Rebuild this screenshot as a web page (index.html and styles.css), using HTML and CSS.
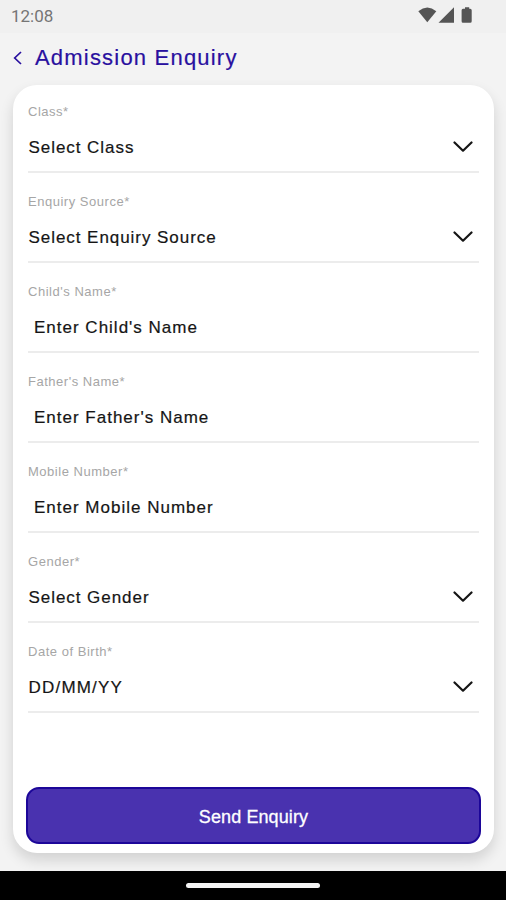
FILE: index.html
```html
<!DOCTYPE html>
<html lang="en">
<head>
<meta charset="utf-8">
<title>Admission Enquiry</title>
<link rel="stylesheet" href="styles.css">
</head>
<body>
<div class="status">
  <span class="time">12:08</span>
  <svg class="status-icons" width="56" height="18" viewBox="0 0 56 18" fill="#555">
    <path d="M0.3 4.2Q9.3 -3.2 18.3 4.2L9.3 15.2Z"/>
    <path d="M20.5 15.8L36 .2V15.8Z"/>
    <path d="M45 1.8H47V.3H51.200V1.8H52.200Q53.700 1.8 53.700 3.300V14.300Q53.700 15.800 52.200 15.800H45Q43.600 15.800 43.600 14.300V3.300Q43.600 1.800 45 1.800Z"/>
  </svg>
</div>
<header class="header">
  <svg class="back" width="10" height="14" viewBox="0 0 10 14"><path d="M8 1L1.700 7L8 13"/></svg>
  <h1 class="title">Admission Enquiry</h1>
</header>
<main class="card">
  <div class="field"><div class="label">Class*</div><div class="value">Select Class<svg class="chevron" viewBox="0 0 20 12"><path d="M1.500 1.500L10 9.700L18.500 1.500"/></svg></div></div>
  <div class="field"><div class="label">Enquiry Source*</div><div class="value">Select Enquiry Source<svg class="chevron" viewBox="0 0 20 12"><path d="M1.500 1.500L10 9.700L18.500 1.500"/></svg></div></div>
  <div class="field"><div class="label">Child's Name*</div><div class="value input">Enter Child's Name</div></div>
  <div class="field"><div class="label">Father's Name*</div><div class="value input">Enter Father's Name</div></div>
  <div class="field"><div class="label">Mobile Number*</div><div class="value input">Enter Mobile Number</div></div>
  <div class="field"><div class="label">Gender*</div><div class="value">Select Gender<svg class="chevron" viewBox="0 0 20 12"><path d="M1.500 1.500L10 9.700L18.500 1.500"/></svg></div></div>
  <div class="field"><div class="label">Date of Birth*</div><div class="value date">DD/MM/YY<svg class="chevron" viewBox="0 0 20 12"><path d="M1.500 1.500L10 9.700L18.500 1.500"/></svg></div></div>
  <button class="send" type="button">Send Enquiry</button>
</main>
<footer class="navbar"><div class="handle"></div></footer>
</body>
</html>
```
FILE: styles.css
```css
* { box-sizing: border-box; }
body {
  margin: 0;
  height: 900px;
  display: flex;
  flex-direction: column;
  overflow: hidden;
  background: #f3f3f3;
  font-family: "Liberation Sans", Arial, sans-serif;
}
.status {
  height: 33px;
  flex: none;
  display: flex;
  justify-content: space-between;
  padding: 7px 32px 0 11px;
  background: #f0f0f0;
}
.time {
  font: 17px/18px Roboto, sans-serif;
  color: #757575;
}
.header {
  height: 52px;
  flex: none;
  display: flex;
  align-items: center;
  gap: 12px;
  padding: 0 0 3px 13px;
}
.back { fill: none; stroke: #29109f; stroke-width: 1.7; }
.title {
  margin: 0;
  font-size: 22px;
  line-height: 26px;
  font-weight: 400;
  letter-spacing: 1.2px;
  color: #29109f;
  -webkit-text-stroke: 0.2px #29109f;
}
.card {
  height: 768px;
  flex: none;
  display: flex;
  flex-direction: column;
  margin: 0 12px 0 13px;
  padding: 0 13px 9px;
  background: #fff;
  border-radius: 24px;
  box-shadow: 0 7px 14px rgba(0, 0, 0, 0.14);
}
.field {
  height: 90px;
  flex: none;
  margin: 0 2px;
  padding-top: 21px;
  border-bottom: 2px solid #ececec;
}
.field:first-child { height: 88px; padding-top: 19px; }
.label {
  font-size: 13px;
  line-height: 16px;
  letter-spacing: 0.52px;
  color: #a6a6a6;
}
.value {
  display: flex;
  align-items: center;
  justify-content: space-between;
  height: 20px;
  margin-top: 18px;
  padding: 0 6px 0 0.5px;
  font-size: 17px;
  letter-spacing: 0.95px;
  color: #151515;
  -webkit-text-stroke: 0.2px #151515;
}
.input { padding-left: 6px; letter-spacing: 1px; }
.date { letter-spacing: 1.2px; }
.chevron {
  width: 20px;
  height: 12px;
  margin-bottom: 3px;
  fill: none;
  stroke: #151515;
  stroke-width: 2.2;
  stroke-linecap: round;
  stroke-linejoin: round;
}
.send {
  height: 57px;
  margin-top: auto;
  padding: 3px 0 0;
  border: 2px solid #1c0699;
  border-radius: 13px;
  background: #4932af;
  color: #fff;
  font: 18px "Liberation Sans", Arial, sans-serif;
  letter-spacing: 0.1px;
  -webkit-text-stroke: 0.3px #fff;
}
.navbar {
  height: 29px;
  flex: none;
  margin-top: auto;
  padding-top: 12px;
  background: #000;
  z-index: 1;
}
.handle {
  width: 134px;
  height: 5px;
  margin: 0 auto;
  border-radius: 3px;
  background: #f4f4f4;
}
```
